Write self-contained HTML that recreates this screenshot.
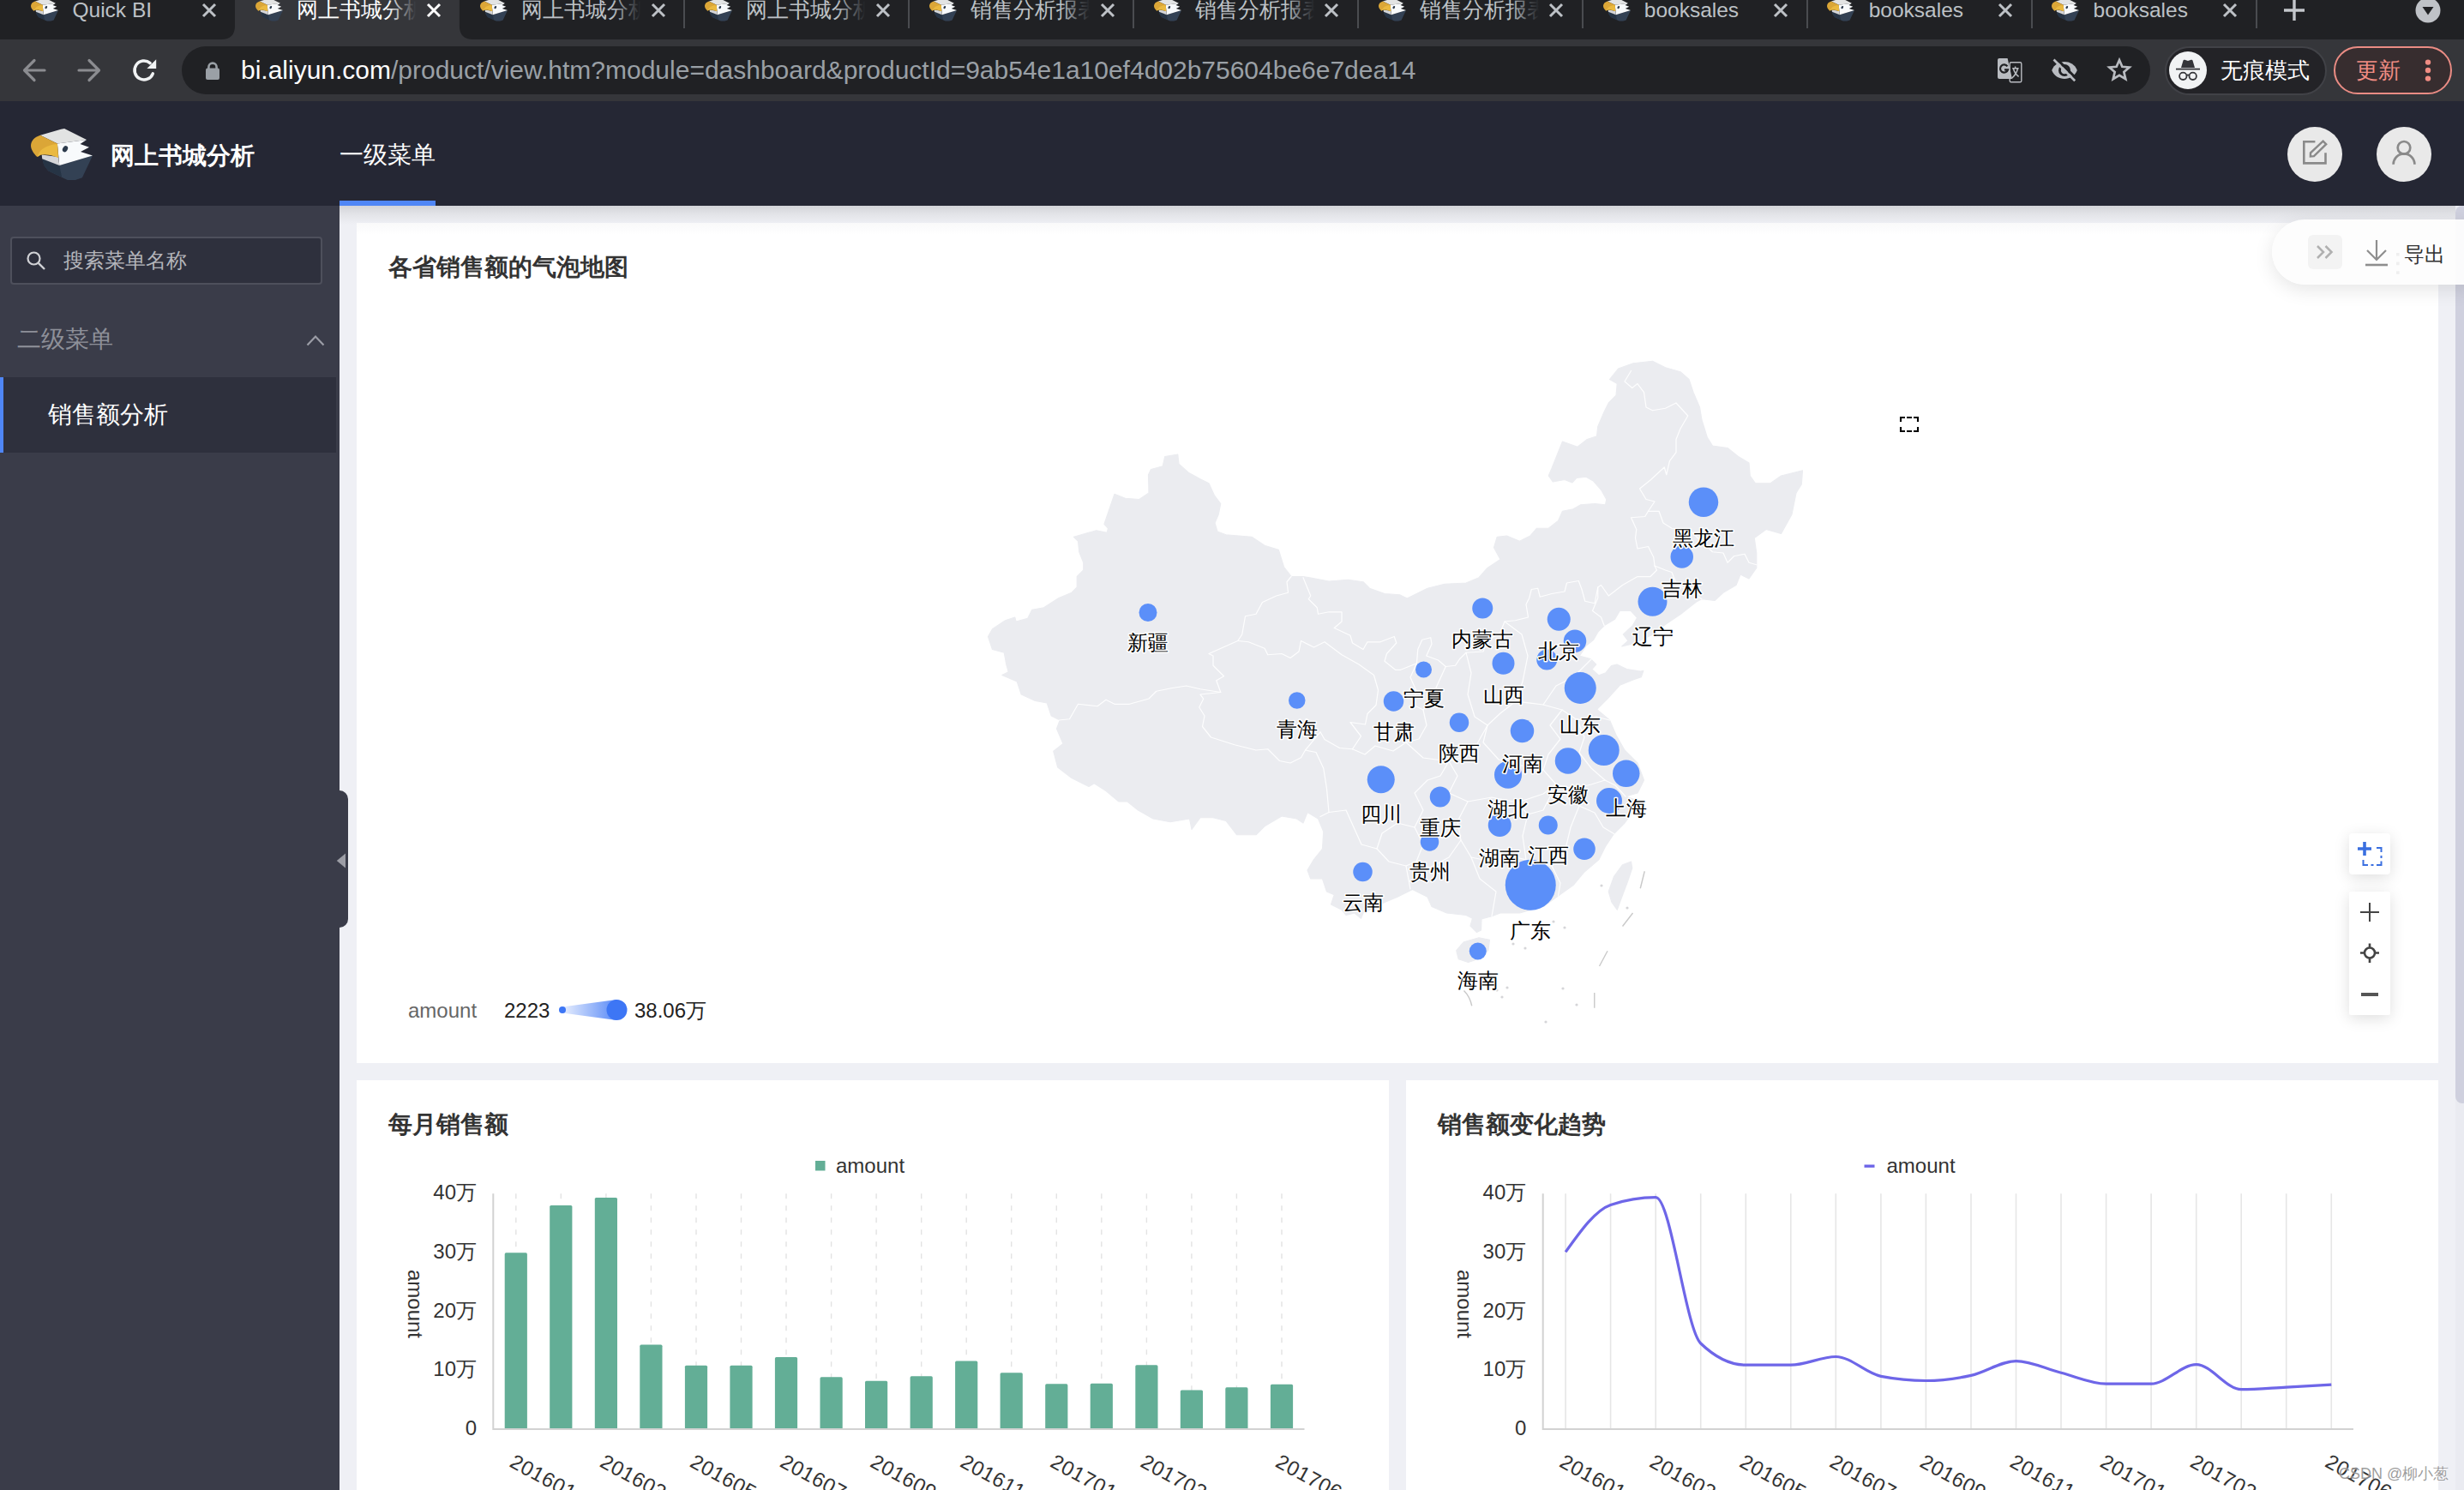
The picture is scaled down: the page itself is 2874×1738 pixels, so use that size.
<!DOCTYPE html>
<html lang="zh"><head><meta charset="utf-8"><title>网上书城分析</title>
<style>
*{box-sizing:border-box}
html,body{margin:0;padding:0}
body{width:2874px;height:1738px;overflow:hidden;position:relative;background:#eff0f5;font-family:"Liberation Sans",sans-serif;color:#333}
.abs{position:absolute}
.t{position:absolute;white-space:nowrap;line-height:1}
svg{position:absolute;overflow:visible}
svg text{font-family:"Liberation Sans",sans-serif}
#tabbar{left:0;top:0;width:2874px;height:46px;background:#202124}
#toolbar{left:0;top:46px;width:2874px;height:72px;background:#35363a}
.tab{position:absolute;top:0;height:46px;width:262px}
.tabtxt{position:absolute;left:72.4px;top:-2px;font-size:24.5px;line-height:28px;color:#bdc1c6;white-space:nowrap;overflow:hidden;width:140px}
.tabsep{position:absolute;top:0;width:2px;height:33px;background:#4a4c50}
#apphdr{left:0;top:118px;width:2874px;height:122px;background:#252734}
#sidebar{left:0;top:240px;width:396px;height:1498px;background:#3a3c49}
.card{position:absolute;background:#fff}
.ctitle{position:absolute;font-size:28px;font-weight:bold;color:#333;line-height:1;white-space:nowrap}
</style></head><body>

<svg width="0" height="0" style="position:absolute"><defs>
<symbol id="eagle" viewBox="9.9 9.9 72 60">
<polygon points="23.1,45.1 43.2,52.9 81.9,41.4 69.8,67.1 61.8,69.8 52.6,69.8 30.1,59.1 25.2,52.6" fill="#334154"/>
<polygon points="23.1,45.1 43.2,52.9 46,66.5 30.1,59.1 25.2,52.6" fill="#263445"/>
<polygon points="20.9,17.7 45,10.6 49,10 74.9,22.8 40.8,27.4" fill="#e2e3e3"/>
<polygon points="40.8,27.4 74.9,22.8 67.4,27.9 77.9,31.7 67.9,36.8 81.9,41.4 43.2,52.9" fill="#f8fafc"/>
<polygon points="22.6,40.3 41.9,43 43.2,52.9 23.1,45.1" fill="#d4d5d8"/>
<path d="M20.9,17.7 L40.8,27.4 L41.9,44 C36,41 28,39.3 21.5,40.5 L17.2,43 C13,39 10,34 9.9,30 C10,24 14,20 20.9,17.7 Z" fill="#dba637"/>
<path d="M40.8,28 C33,28.5 25.5,31.5 21.5,35.5 C19.3,38 18.3,40.5 17.6,42.8 L21.5,40.5 C28,39.3 36,41 41.9,44 Z" fill="#eab940"/>
<ellipse cx="49.9" cy="33.6" rx="2.8" ry="3.8" transform="rotate(32 49.9 33.6)" fill="#2d3b4d"/>
</symbol>
</defs></svg>

<div id="tabbar" class="abs">
<svg width="2874" height="46" viewBox="0 0 2874 46" style="left:0;top:0"><path d="M258.0,46 Q274.0,46 274.0,30 L274.0,0 L535.9,0 L535.9,30 Q535.9,46 551.9,46 Z" fill="#35363a"/></svg>
<div class="tab" style="left:12.1px"><svg width="32" height="26.7" style="left:24.2px;top:-1.7px"><use href="#eagle" width="32" height="26.7"/></svg><div class="tabtxt" style="color:#bdc1c6">Quick BI</div><svg width="18" height="18" viewBox="0 0 18 18" style="left:222.9px;top:3px"><path d="M2,2 L16,16 M16,2 L2,16" stroke="#bdc1c6" stroke-width="3" fill="none"/></svg></div>
<div class="tab" style="left:274.0px"><svg width="32" height="26.7" style="left:24.2px;top:-1.7px"><use href="#eagle" width="32" height="26.7"/></svg><div class="tabtxt" style="color:#ffffff"><span style="display:inline-block;width:147.0px;text-align:justify;text-align-last:justify">网上书城分析</span></div><div class="abs" style="left:178px;top:0;width:36px;height:30px;background:linear-gradient(90deg,rgba(53,54,58,0),rgba(53,54,58,1) 92%)"></div><svg width="18" height="18" viewBox="0 0 18 18" style="left:222.9px;top:3px"><path d="M2,2 L16,16 M16,2 L2,16" stroke="#ffffff" stroke-width="3" fill="none"/></svg></div>
<div class="tab" style="left:535.9px"><svg width="32" height="26.7" style="left:24.2px;top:-1.7px"><use href="#eagle" width="32" height="26.7"/></svg><div class="tabtxt" style="color:#bdc1c6"><span style="display:inline-block;width:147.0px;text-align:justify;text-align-last:justify">网上书城分析</span></div><div class="abs" style="left:178px;top:0;width:36px;height:30px;background:linear-gradient(90deg,rgba(32,33,36,0),rgba(32,33,36,1) 92%)"></div><svg width="18" height="18" viewBox="0 0 18 18" style="left:222.9px;top:3px"><path d="M2,2 L16,16 M16,2 L2,16" stroke="#bdc1c6" stroke-width="3" fill="none"/></svg></div>
<div class="tab" style="left:797.8px"><svg width="32" height="26.7" style="left:24.2px;top:-1.7px"><use href="#eagle" width="32" height="26.7"/></svg><div class="tabtxt" style="color:#bdc1c6"><span style="display:inline-block;width:147.0px;text-align:justify;text-align-last:justify">网上书城分析</span></div><div class="abs" style="left:178px;top:0;width:36px;height:30px;background:linear-gradient(90deg,rgba(32,33,36,0),rgba(32,33,36,1) 92%)"></div><svg width="18" height="18" viewBox="0 0 18 18" style="left:222.9px;top:3px"><path d="M2,2 L16,16 M16,2 L2,16" stroke="#bdc1c6" stroke-width="3" fill="none"/></svg></div>
<div class="tab" style="left:1059.7px"><svg width="32" height="26.7" style="left:24.2px;top:-1.7px"><use href="#eagle" width="32" height="26.7"/></svg><div class="tabtxt" style="color:#bdc1c6"><span style="display:inline-block;width:147.0px;text-align:justify;text-align-last:justify">销售分析报表</span></div><div class="abs" style="left:178px;top:0;width:36px;height:30px;background:linear-gradient(90deg,rgba(32,33,36,0),rgba(32,33,36,1) 92%)"></div><svg width="18" height="18" viewBox="0 0 18 18" style="left:222.9px;top:3px"><path d="M2,2 L16,16 M16,2 L2,16" stroke="#bdc1c6" stroke-width="3" fill="none"/></svg></div>
<div class="tab" style="left:1321.6px"><svg width="32" height="26.7" style="left:24.2px;top:-1.7px"><use href="#eagle" width="32" height="26.7"/></svg><div class="tabtxt" style="color:#bdc1c6"><span style="display:inline-block;width:147.0px;text-align:justify;text-align-last:justify">销售分析报表</span></div><div class="abs" style="left:178px;top:0;width:36px;height:30px;background:linear-gradient(90deg,rgba(32,33,36,0),rgba(32,33,36,1) 92%)"></div><svg width="18" height="18" viewBox="0 0 18 18" style="left:222.9px;top:3px"><path d="M2,2 L16,16 M16,2 L2,16" stroke="#bdc1c6" stroke-width="3" fill="none"/></svg></div>
<div class="tab" style="left:1583.5px"><svg width="32" height="26.7" style="left:24.2px;top:-1.7px"><use href="#eagle" width="32" height="26.7"/></svg><div class="tabtxt" style="color:#bdc1c6"><span style="display:inline-block;width:147.0px;text-align:justify;text-align-last:justify">销售分析报表</span></div><div class="abs" style="left:178px;top:0;width:36px;height:30px;background:linear-gradient(90deg,rgba(32,33,36,0),rgba(32,33,36,1) 92%)"></div><svg width="18" height="18" viewBox="0 0 18 18" style="left:222.9px;top:3px"><path d="M2,2 L16,16 M16,2 L2,16" stroke="#bdc1c6" stroke-width="3" fill="none"/></svg></div>
<div class="tab" style="left:1845.4px"><svg width="32" height="26.7" style="left:24.2px;top:-1.7px"><use href="#eagle" width="32" height="26.7"/></svg><div class="tabtxt" style="color:#bdc1c6">booksales</div><svg width="18" height="18" viewBox="0 0 18 18" style="left:222.9px;top:3px"><path d="M2,2 L16,16 M16,2 L2,16" stroke="#bdc1c6" stroke-width="3" fill="none"/></svg></div>
<div class="tab" style="left:2107.3px"><svg width="32" height="26.7" style="left:24.2px;top:-1.7px"><use href="#eagle" width="32" height="26.7"/></svg><div class="tabtxt" style="color:#bdc1c6">booksales</div><svg width="18" height="18" viewBox="0 0 18 18" style="left:222.9px;top:3px"><path d="M2,2 L16,16 M16,2 L2,16" stroke="#bdc1c6" stroke-width="3" fill="none"/></svg></div>
<div class="tab" style="left:2369.2px"><svg width="32" height="26.7" style="left:24.2px;top:-1.7px"><use href="#eagle" width="32" height="26.7"/></svg><div class="tabtxt" style="color:#bdc1c6">booksales</div><svg width="18" height="18" viewBox="0 0 18 18" style="left:222.9px;top:3px"><path d="M2,2 L16,16 M16,2 L2,16" stroke="#bdc1c6" stroke-width="3" fill="none"/></svg></div>
<div class="tabsep" style="left:797.4px"></div>
<div class="tabsep" style="left:1059.3px"></div>
<div class="tabsep" style="left:1321.2px"></div>
<div class="tabsep" style="left:1583.1px"></div>
<div class="tabsep" style="left:1845.0px"></div>
<div class="tabsep" style="left:2106.9px"></div>
<div class="tabsep" style="left:2368.8px"></div>
<div class="tabsep" style="left:2630.7px"></div>
<svg width="26" height="26" viewBox="0 0 26 26" style="left:2663px;top:-1px"><path d="M13,1 V25 M1,13 H25" stroke="#c4c7cc" stroke-width="3.4" fill="none"/></svg>
<svg width="30" height="30" viewBox="0 0 30 30" style="left:2817px;top:-3px"><circle cx="15" cy="15" r="14.5" fill="#bfc2c7"/><path d="M8.5,11 H21.5 L15,20.5 Z" fill="#202124"/></svg>
</div>
<div id="toolbar" class="abs">
<svg width="30" height="30" viewBox="0 0 30 30" style="left:25px;top:20.5px"><path d="M27,15 H4.5 M15,3.5 L3.5,15 L15,26.5" stroke="#8b8c90" stroke-width="3.2" fill="none" stroke-linecap="round" stroke-linejoin="round"/></svg>
<svg width="30" height="30" viewBox="0 0 30 30" style="left:89px;top:20.5px"><path d="M3,15 H25.5 M15,3.5 L26.5,15 L15,26.5" stroke="#8b8c90" stroke-width="3.2" fill="none" stroke-linecap="round" stroke-linejoin="round"/></svg>
<svg width="32" height="32" viewBox="0 0 32 32" style="left:153px;top:20px"><path d="M25.3,19.8 A11,11 0 1 1 22.1,7.6" stroke="#f1f3f4" stroke-width="3.5" fill="none" stroke-linecap="round"/><path d="M29.2,3.3 V14.1 H18.4 Z" fill="#f1f3f4"/></svg>
<div class="abs" style="left:212px;top:8px;width:2296px;height:56px;border-radius:28px;background:#202124"></div>
<svg width="20" height="26" viewBox="0 0 20 26" style="left:238px;top:24px"><path d="M5.4,11 V8.2 A4.6,4.6 0 0 1 14.6,8.2 V11" stroke="#9aa0a6" stroke-width="2.6" fill="none"/><rect x="2" y="9.5" width="16" height="13.5" rx="2" fill="#9aa0a6"/></svg>
<svg width="1380" height="72" viewBox="0 0 1380 72" style="left:281px;top:0"><text x="0" y="46.4" font-size="30" fill="#9aa0a6" textLength="1370.5" lengthAdjust="spacing"><tspan fill="#fff">bi.aliyun.com</tspan>/product/view.htm?module=dashboard&amp;productId=9ab54e1a10ef4d02b75604be6e7dea14</text></svg>
<svg width="30" height="30" viewBox="0 0 30 30" style="left:2329.5px;top:21.5px"><rect x="14.2" y="4.8" width="13.6" height="23" rx="1.6" fill="none" stroke="#b9bcc1" stroke-width="1.4"/><path d="M2,0 H11.6 L17,24 H2 Q0,24 0,22 V2 Q0,0 2,0 Z" fill="#b9bcc1"/><path d="M17.2,11.8 H24.6 M20.6,9.6 V11.8 M18.4,12 C19.4,16 22,19.4 24.6,21.4 M23.4,12 C22.6,16.4 19.8,20.4 16.6,23.2" stroke="#b9bcc1" stroke-width="1.5" fill="none"/><path d="M11.4,9.4 A4.6,4.6 0 1 0 12,13.4 H8" stroke="#202124" stroke-width="2.2" fill="none"/></svg>
<svg width="32" height="28" viewBox="0 0 32 28" style="left:2392px;top:22px"><path d="M1.2,14 C6,0.7 26,0.7 30.8,14 C26,27.3 6,27.3 1.2,14 Z" fill="#b9bcc1"/><circle cx="16" cy="14" r="7" fill="#202124"/><circle cx="16" cy="14" r="4.2" fill="#b9bcc1"/><path d="M5.6,-0.6 L30.2,24" stroke="#202124" stroke-width="3"/><path d="M3.5,1.5 L28.2,26.2" stroke="#b9bcc1" stroke-width="2.7"/></svg>
<svg width="28" height="28" viewBox="0 0 32 32" style="left:2458px;top:21px"><path d="M16,3.5 L19.8,12.3 L29.3,13.1 L22.1,19.4 L24.3,28.7 L16,23.8 L7.7,28.7 L9.9,19.4 L2.7,13.1 L12.2,12.3 Z" stroke="#b9bcc1" stroke-width="3.1" fill="none" stroke-linejoin="miter"/></svg>
<div class="abs" style="left:2524.5px;top:7.5px;width:189px;height:57px;border-radius:28.5px;background:#232327;border:2px solid #414247"></div>
<svg width="44" height="44" viewBox="0 0 44 44" style="left:2530px;top:14px"><circle cx="22" cy="22" r="22" fill="#f1f3f4"/><path d="M14,19 L16.5,10.5 Q17,9.3 18.3,9.8 L22,11 L25.7,9.8 Q27,9.3 27.5,10.5 L30,19 Z" fill="#35363a"/><path d="M8,20.6 H36" stroke="#35363a" stroke-width="1.8"/><circle cx="16.3" cy="28.8" r="4.2" fill="none" stroke="#35363a" stroke-width="1.8"/><circle cx="27.7" cy="28.8" r="4.2" fill="none" stroke="#35363a" stroke-width="1.8"/><path d="M20.3,28 Q22,26.8 23.7,28" stroke="#35363a" stroke-width="1.6" fill="none"/></svg>
<div class="t" style="left:2590px;top:21px;font-size:26px;line-height:30px;color:#fff;width:104px;text-align:justify;text-align-last:justify">无痕模式</div>
<div class="abs" style="left:2722px;top:8px;width:138px;height:56px;border-radius:28px;background:#372d2f;border:2px solid #ea8c84"></div>
<div class="t" style="left:2748px;top:21px;font-size:26px;line-height:30px;color:#f08c83;width:52px;text-align:justify;text-align-last:justify">更新</div>
<svg width="10" height="32" viewBox="0 0 10 32" style="left:2827px;top:20px"><circle cx="5" cy="6.6" r="3.2" fill="#f08c83"/><circle cx="5" cy="16" r="3.2" fill="#f08c83"/><circle cx="5" cy="25.6" r="3.2" fill="#f08c83"/></svg>
</div>
<div id="apphdr" class="abs">
<svg width="72" height="60" style="left:36px;top:32px"><use href="#eagle" width="72" height="60"/></svg>
<div class="t" style="left:129px;top:50px;font-size:28px;font-weight:bold;color:#fff;width:168px;text-align:justify;text-align-last:justify">网上书城分析</div>
<div class="t" style="left:396px;top:49px;font-size:28px;color:#fff;width:112px;text-align:justify;text-align-last:justify">一级菜单</div>
<div class="abs" style="left:396px;top:116px;width:112px;height:6px;background:#4f86f6"></div>
<svg width="64" height="64" viewBox="0 0 64 64" style="left:2668px;top:30px"><circle cx="32" cy="32" r="32" fill="#e9e9e9"/><path d="M32.4,17.2 H19.3 V42.4 H44.5 V30.2" stroke="#8a8a8a" stroke-width="2.6" fill="none"/><path d="M41.6,16.6 L45.2,20.2 L31,34.2 L26.9,34.5 L27,30.4 Z" stroke="#8a8a8a" stroke-width="2.4" fill="none" stroke-linejoin="miter"/></svg>
<svg width="64" height="64" viewBox="0 0 64 64" style="left:2772px;top:30px"><circle cx="32" cy="32" r="32" fill="#e9e9e9"/><circle cx="32" cy="24.3" r="7.3" stroke="#8a8a8a" stroke-width="2.7" fill="none"/><path d="M19.6,43.8 A12.4,12.4 0 0 1 44.4,43.8" stroke="#8a8a8a" stroke-width="2.7" fill="none"/></svg>
</div>
<div id="sidebar" class="abs">
<div class="abs" style="left:12px;top:36px;width:364px;height:56px;border-radius:4px;background:#2e303d;border:2px solid #4e505c"></div>
<svg width="24" height="24" viewBox="0 0 24 24" style="left:30px;top:52px"><circle cx="9.5" cy="9.5" r="7" stroke="#d0d1d5" stroke-width="2.2" fill="none"/><path d="M14.8,14.8 L22,22" stroke="#d0d1d5" stroke-width="2.4"/></svg>
<div class="t" style="left:74px;top:52px;font-size:24px;color:#b4b5bb;width:144px;text-align:justify;text-align-last:justify">搜索菜单名称</div>
<div class="t" style="left:20px;top:142px;font-size:28px;color:#8e9099;width:112px;text-align:justify;text-align-last:justify">二级菜单</div>
<svg width="22" height="14" viewBox="0 0 22 14" style="left:357px;top:150px"><path d="M1.5,12.5 L11,2.5 L20.5,12.5" stroke="#9b9da6" stroke-width="2.2" fill="none"/></svg>
<div class="abs" style="left:0;top:200px;width:392px;height:88px;background:#2e303d"></div>
<div class="abs" style="left:0;top:200px;width:4px;height:88px;background:#4f86f6"></div>
<div class="t" style="left:56px;top:230px;font-size:28px;color:#fff;width:140px;text-align:justify;text-align-last:justify">销售额分析</div>
</div>
<div class="abs" style="left:396px;top:240px;width:2468px;height:22px;background:linear-gradient(180deg,#d3d4d9 0%,#e3e4e8 45%,#eff0f5 100%)"></div>
<div class="card" style="left:416px;top:260px;width:2428px;height:980px;background:linear-gradient(180deg,#f9f9fa 0,#fff 14px)"></div>
<div class="card" style="left:416px;top:1260px;width:1204px;height:478px"></div>
<div class="card" style="left:1640px;top:1260px;width:1204px;height:478px"></div>
<div class="ctitle" style="left:453px;top:298px;width:280px;text-align:justify;text-align-last:justify">各省销售额的气泡地图</div>
<div class="ctitle" style="left:453px;top:1298px;width:140px;text-align:justify;text-align-last:justify">每月销售额</div>
<div class="ctitle" style="left:1677px;top:1298px;width:196px;text-align:justify;text-align-last:justify">销售额变化趋势</div>
<div class="abs" style="left:396px;top:922px;width:10px;height:160px;background:#3a3c49;border-radius:0 10px 10px 0"></div>
<svg width="12" height="18" viewBox="0 0 12 18" style="left:392px;top:995px"><path d="M11,0.5 V17.5 L0.8,9 Z" fill="#9c9da5"/></svg>
<svg width="2874" height="1738" viewBox="0 0 2874 1738" style="left:0;top:0">
<g fill="#ebecf0" stroke="#ebecf0" stroke-width="1.2" stroke-linejoin="round">
<polygon points="1152.5,742.5 1157.5,733.75 1172.5,723.75 1183.75,720 1185,725 1198.75,721.25 1203.75,711.25 1217.5,708.75 1235,697.5 1250,691.25 1256.25,685 1256.25,672.5 1263.75,665 1263.75,656.25 1258.75,643.75 1257.5,631.25 1252.5,626.25 1278.75,618.75 1291.25,621.25 1292.5,616.25 1288,611.25 1300,576.25 1312.5,581.25 1328.75,582.5 1340,575 1339.5,553.75 1342.5,547.5 1356.25,543.75 1358.75,532.5 1373.75,530 1375,541.25 1386.25,551.25 1400,558.75 1410,563.75 1416.25,577.5 1423.75,587.5 1421.25,600 1417,610 1420,620 1430,623.75 1460,626.25 1475,636.25 1491.25,641.25 1497.5,661.25 1506.25,672.5 1520,672.5 1550,678 1572.5,676.25 1590,678.75 1597.5,686.25 1615,692.5 1632.5,693.75 1641.25,698 1665,686.25 1685,681.25 1710,680 1725,673.75 1735,662.5 1750,652.5 1742.5,638.75 1746.25,626.25 1757.5,625 1772.5,631.25 1785,625 1792.5,616.25 1806.25,616.25 1817.5,607.5 1822.5,596.25 1835,593.75 1843.75,588.75 1860,587.5 1872.5,588.75 1873.75,582.5 1867.5,571.25 1858.75,561.25 1850,556.25 1838.75,557.5 1833.75,563 1825,559.5 1811.25,562 1806.25,555 1810,546.25 1822.5,515 1840,521.25 1851.25,512.5 1862.5,508.75 1863.75,497.5 1871.25,480 1876.25,470 1885,461.25 1886.25,447.5 1877.5,442.5 1887.5,430 1905,423.75 1927.5,421.25 1942.5,428.75 1960,433.75 1970,442.5 1975,457.5 1982.5,475 1985,490 1991.25,510 1997.5,520 2015,522.5 2027.5,532.5 2040,540 2041.25,555 2047.5,563.75 2065,563.75 2077.5,555 2102.5,548.75 2101.25,565 2095,575 2090,600 2077.5,622.5 2060,617.5 2046.25,627.5 2048.75,645 2048.75,662.5 2040,675 2030,670 2025,682.5 2010,691.25 2000,700.5 1985,698.75 1978.6,702 1962.3,714.9 1942,728.7 1925.8,740.9 1905.5,750.6 1891.7,753.9 1899,747.4 1893.3,740 1903.9,730.3 1909.6,720.6 1902.3,712.5 1889.3,712.5 1883.6,722.2 1871.4,729.5 1864.1,736.8 1858.4,746.6 1850.3,753 1842.2,765.2 1855.2,768.5 1861.7,775 1856.8,780.6 1864.9,787.9 1873,784.7 1879.5,776.6 1886,775 1897.4,780.6 1913.6,783.1 1916.9,782.3 1914.4,789.6 1905.5,792.8 1889.3,799.3 1875,815 1862.5,827.5 1877.5,840 1885,857.5 1895,875 1910,890 1917.5,910 1910,925 1896,929 1911,934 1910,940 1895,960 1882.5,972.5 1872.5,987.5 1865,1002.5 1847.5,1017.5 1835,1032.5 1817.5,1045 1800,1057.5 1772.5,1065 1750,1065 1740,1068.75 1728,1072 1727.5,1085 1722.5,1087.5 1715,1080 1717.5,1071.25 1710,1067.5 1687.5,1065 1670,1057.5 1665,1046.25 1647.5,1037.5 1630,1046.25 1615,1052.5 1590,1065 1587.5,1071.25 1580,1065 1570,1067.5 1565,1061.25 1552.5,1055 1556.25,1043.75 1547.5,1040 1542.5,1025 1528.75,1025 1525,1015 1532.5,1002.5 1542.5,990 1543.75,970 1537.5,955 1525,947.5 1520,960 1512.5,955 1495,952 1475,963.75 1465,973.75 1442.5,973.75 1430,957.5 1415,953.75 1400,953.75 1390,967.5 1387.5,955 1365,958.75 1345,955 1327.5,945 1315,935 1305,935 1290,922.5 1276.25,913.75 1270,917.5 1250,907.5 1233.75,895 1228.75,876.25 1240,867.5 1232.5,850 1236.25,840 1226.25,835 1221.25,820 1207.5,817.5 1191.25,810 1186.25,795 1168.75,787.5 1176.25,783.75 1173.75,775 1171.25,761.25 1157.5,757.5"/>
<polygon points="1902.5,1005 1892.5,1008.75 1882.5,1022.5 1876.25,1040 1880,1052.5 1886.25,1061.25 1891.25,1047.5 1898.75,1027.5 1903.75,1012.5"/>
<polygon points="1698.75,1108.75 1707.5,1098.75 1725,1093.75 1737.5,1096.25 1736,1108 1727.5,1117.5 1712.5,1122.5 1701.25,1118.75"/>
</g>
<g fill="none" stroke="#fff" stroke-width="1.25" stroke-opacity="0.9" stroke-linejoin="round" stroke-linecap="round">
<polyline points="1506,672.5 1501,678.75 1502.5,691.25 1488.75,695 1472.5,702.5 1465,716.25 1452.5,718.75 1448.75,740 1443.75,747.5 1410,762.5 1415,765 1415,776.25 1427.5,788.75 1418.75,793.75 1423.75,807.5 1400,803.75 1383.75,800 1367.5,802.5 1348.75,806.25 1340,815 1317.5,821.25 1300,821.25 1290,816.25 1280,823.75 1257.5,821.25 1247.5,838.75 1235,840"/>
<polyline points="1423.75,807.5 1400,810 1403.75,815 1398.75,825 1405,835 1402.5,847.5 1412.5,860 1440,868.75 1465,875 1478.75,873.75 1492.5,887.5 1505,890 1517.5,883.75 1522.5,875"/>
<polyline points="1522.5,875 1535,877.5 1543.75,896.25 1547.5,920 1550,947.5 1540,952.5"/>
<polyline points="1443.75,747.5 1456.25,748.75 1475,756.25 1478.75,763.75 1495,762.5 1505,767.5 1515,760 1517.5,747.5 1532.5,755 1545,748.75 1565,763.75 1585,775 1602.5,787.5 1607.5,805 1605,822.5 1595,832.5 1592.5,845 1575,842.5 1587.5,858.75 1577.5,873.75 1562.5,872.5 1545,862.5 1540,853.75 1522.5,875"/>
<polyline points="1520,673.75 1528.75,695 1526.25,698.75 1536.25,708.75 1537.5,716.25 1550,713.75 1565,713.75 1565,725 1556.25,732.5 1575,741.25 1577.5,750 1590,757.5 1595,748.75 1610,748.75 1626.25,742.5 1628.75,750 1617.5,762.5 1615,771.25 1627.5,781.25 1633.75,781.25 1652.5,773.75 1653.75,757.5 1658.75,746.25 1668.75,743.75 1670,751.25 1663.75,765 1677.5,770 1686.25,777.5 1697.5,776.25 1702.5,768.75 1710,761.25 1730,760 1735,747.5 1750,737.5 1755,725 1767.5,723.75 1782.5,720 1780,705 1783.75,697.5 1786.25,687.5 1793.75,686.25 1796.25,696.25 1810,692.5 1825,690 1827.5,680 1841.25,677.5 1845,687.5 1848.75,701.25 1860,703.75 1863.75,685 1867.5,682.5 1876.25,695 1892.5,682.5 1910,672.5 1925,672.5 1932.5,665 1930,660 1928.75,650 1922.5,637.5 1910,640 1907.5,627.5 1908.75,617.5 1902.5,603.75 1918.75,602.5 1922.5,596.25 1930,585 1920,582.5 1912.5,570 1925,560 1941.25,545 1943.75,553.75 1947.5,537.5 1955,527.5 1955,512.5 1960,500 1968.75,485 1955,470 1942.5,476.25 1927.5,478.75 1920,475 1917.5,457.5 1910,447.5 1903.75,452.5 1895,445 1902.5,432.5"/>
<polyline points="1922.5,596.25 1935,596.25 1940,610 1950,616.25 1970,617.5 1985,632 1997.5,643.75 2010,645 2015,656.25 2022.5,648.75 2035,646.25 2040,656.25 2048.75,658.75"/>
<polyline points="1930,660 1942.5,665 1950,667.5 1955,680 1970,690 1985,698.75"/>
<polyline points="1863.75,685 1863.75,697.5 1857.5,712.5 1867.5,720 1871.25,730"/>
<polyline points="1652.5,773.75 1645,790 1652,806 1648,822 1660,828 1668,818 1676,800 1686.25,777.5"/>
<polyline points="1660,828 1664,846 1655,862 1640,866 1625,876 1604,870 1592,880 1577.5,873.75"/>
<polyline points="1710,761.25 1716,785 1712,810 1720,836 1735,846"/>
<polyline points="1640,866 1660,884 1690,888 1716,880 1735,846"/>
<polyline points="1755,725 1775,740 1782,765 1776,795 1768,818 1750,832 1735,846"/>
<polyline points="1735,846 1730,866 1748,886 1770,892 1800,898 1806,880 1820,862 1808,846 1822,828 1800,822 1768,818"/>
<polyline points="1800,822 1815,800 1835,790 1850,775 1857,768"/>
<polyline points="1822,828 1840,840 1862,836 1877.5,840"/>
<polyline points="1840,840 1848,860 1842,878 1856,896 1872,910 1884,916 1896,929"/>
<polyline points="1690,888 1700,905 1690,925 1712,935 1740,930 1770,936 1800,926 1815,915 1800,898"/>
<polyline points="1550,947.5 1570,945 1588,985 1606,990 1612,972 1630,960 1650,965 1660,945 1650,925 1665,910 1680,905 1690,888"/>
<polyline points="1650,965 1660,985 1652,1005 1668,1012 1690,1000 1704,980 1700,958 1712,935"/>
<polyline points="1606,990 1620,1005 1640,1010 1652,1005"/>
<polyline points="1640,1010 1645,1037"/>
<polyline points="1704,980 1716,1000 1740,1005 1760,998 1780,1003 1776,975 1782,950 1770,936"/>
<polyline points="1782,950 1800,945 1815,915 1835,920 1842,940 1832,965 1826,990 1810,1010 1780,1003"/>
<polyline points="1835,920 1856,915 1872,910"/>
<polyline points="1842,940 1860,948 1870,965 1882.5,972.5"/>
<polyline points="1810,1010 1820,1030 1817.5,1045"/>
<polyline points="1716,1000 1726,1025 1745,1040 1740,1068.75"/>
</g>
<g stroke="#c9c9c9" stroke-width="1.4" fill="none">
<line x1="1918.25" y1="1016.25" x2="1913.25" y2="1036.25"/>
<line x1="1904.5" y1="1065" x2="1892.5" y2="1080.5"/>
<line x1="1875" y1="1109.25" x2="1865.5" y2="1127"/>
<line x1="1859.75" y1="1158" x2="1859.75" y2="1175.75"/>
<path d="M1707.5,1155.5 Q1714.5,1162.5 1716.75,1173.25"/>
</g>
<g fill="#d5d5d8">
<circle cx="1868" cy="1033" r="1.6"/>
<circle cx="1898" cy="1059" r="1.6"/>
<circle cx="1812" cy="1075" r="1.6"/>
<circle cx="1825" cy="1082" r="1.6"/>
<circle cx="1765" cy="1101" r="1.6"/>
<circle cx="1779" cy="1106" r="1.6"/>
<circle cx="1746" cy="1155" r="1.6"/>
<circle cx="1758" cy="1152" r="1.6"/>
<circle cx="1823" cy="1153" r="1.6"/>
<circle cx="1839" cy="1172" r="1.6"/>
<circle cx="1803" cy="1192" r="1.6"/>
<circle cx="1752" cy="1163" r="1.6"/>
</g>
<g fill="#5b8ff9">
<circle cx="1987" cy="585.75" r="17.25"/>
<circle cx="1961.75" cy="649.5" r="13.25"/>
<circle cx="1927.5" cy="701.75" r="17"/>
<circle cx="1729.25" cy="709.5" r="12"/>
<circle cx="1818.25" cy="722.25" r="13.5"/>
<circle cx="1837" cy="747.75" r="13.25"/>
<circle cx="1804.25" cy="769.5" r="12"/>
<circle cx="1753.5" cy="773.75" r="13"/>
<circle cx="1660.5" cy="781" r="9.5"/>
<circle cx="1339" cy="714.5" r="10.5"/>
<circle cx="1512.75" cy="817" r="9.75"/>
<circle cx="1625.5" cy="818" r="11.75"/>
<circle cx="1702" cy="842.75" r="11.25"/>
<circle cx="1843.25" cy="802.5" r="18.5"/>
<circle cx="1775.5" cy="852.5" r="13.75"/>
<circle cx="1829" cy="887.5" r="15.25"/>
<circle cx="1870.75" cy="875" r="18"/>
<circle cx="1896.75" cy="902.25" r="15.75"/>
<circle cx="1877" cy="934" r="15"/>
<circle cx="1759" cy="903.75" r="16"/>
<circle cx="1610.75" cy="909.25" r="16"/>
<circle cx="1679.75" cy="929.5" r="12"/>
<circle cx="1749.25" cy="962.5" r="13.5"/>
<circle cx="1805.75" cy="962.5" r="11"/>
<circle cx="1848" cy="990.25" r="12.75"/>
<circle cx="1667.5" cy="982" r="10.75"/>
<circle cx="1589.5" cy="1017" r="11.25"/>
<circle cx="1785.25" cy="1032.25" r="29.5"/>
<circle cx="1723.75" cy="1109.5" r="10"/>
</g>
<g font-size="24" text-anchor="middle" fill="#000" stroke="#fff" stroke-width="3" stroke-linejoin="round" paint-order="stroke">
<text x="1987" y="635.6" textLength="72" lengthAdjust="spacing">黑龙江</text>
<text x="1961.75" y="695.4" textLength="48" lengthAdjust="spacing">吉林</text>
<text x="1927.5" y="751.4" textLength="48" lengthAdjust="spacing">辽宁</text>
<text x="1729.25" y="754.1" textLength="72" lengthAdjust="spacing">内蒙古</text>
<text x="1818.25" y="768.4" textLength="48" lengthAdjust="spacing">北京</text>
<text x="1753.5" y="819.4" textLength="48" lengthAdjust="spacing">山西</text>
<text x="1660.5" y="823.1" textLength="48" lengthAdjust="spacing">宁夏</text>
<text x="1339" y="757.6" textLength="48" lengthAdjust="spacing">新疆</text>
<text x="1512.75" y="859.4" textLength="48" lengthAdjust="spacing">青海</text>
<text x="1625.5" y="862.4" textLength="48" lengthAdjust="spacing">甘肃</text>
<text x="1702" y="886.6" textLength="48" lengthAdjust="spacing">陕西</text>
<text x="1843.25" y="853.6" textLength="48" lengthAdjust="spacing">山东</text>
<text x="1775.5" y="898.9" textLength="48" lengthAdjust="spacing">河南</text>
<text x="1829" y="935.4" textLength="48" lengthAdjust="spacing">安徽</text>
<text x="1896.75" y="950.6" textLength="48" lengthAdjust="spacing">上海</text>
<text x="1759" y="952.4" textLength="48" lengthAdjust="spacing">湖北</text>
<text x="1610.75" y="957.9" textLength="48" lengthAdjust="spacing">四川</text>
<text x="1679.75" y="974.1" textLength="48" lengthAdjust="spacing">重庆</text>
<text x="1749.25" y="1008.6" textLength="48" lengthAdjust="spacing">湖南</text>
<text x="1805.75" y="1006.1" textLength="48" lengthAdjust="spacing">江西</text>
<text x="1667.5" y="1025.3" textLength="48" lengthAdjust="spacing">贵州</text>
<text x="1589.5" y="1060.8" textLength="48" lengthAdjust="spacing">云南</text>
<text x="1785.25" y="1094.3" textLength="48" lengthAdjust="spacing">广东</text>
<text x="1723.75" y="1152.1" textLength="48" lengthAdjust="spacing">海南</text>
</g>
<path d="M2217,492 V487 H2222 M2224,487 H2230 M2232,487 H2237 V492 M2237,498 V503 H2232 M2230,503 H2224 M2222,503 H2217 V498" fill="none" stroke="#000" stroke-width="2.1" stroke-linejoin="miter"/>
</svg>
<div class="t" style="left:476px;top:1167px;font-size:24px;color:#666">amount</div>
<div class="t" style="left:588px;top:1167px;font-size:24px;color:#222">2223</div>
<svg width="90" height="30" viewBox="0 0 90 30" style="left:646px;top:1163px"><defs><linearGradient id="lg" x1="0" x2="1" y1="0" y2="0"><stop offset="0" stop-color="#3d76f5" stop-opacity="0.12"/><stop offset="1" stop-color="#3d76f5" stop-opacity="0.85"/></linearGradient></defs><path d="M10,11.5 L73,3 V27 L10,18.5 Z" fill="url(#lg)"/><circle cx="10" cy="15" r="4" fill="#3d76f5"/><circle cx="73.5" cy="15" r="12" fill="#3d76f5"/></svg>
<div class="t" style="left:740px;top:1167px;font-size:24px;color:#222">38.06万</div>
<div class="abs" style="left:2740px;top:972px;width:48px;height:48px;background:#fff;border-radius:4px;box-shadow:0 4px 18px rgba(0,0,0,.13)"></div>
<div class="abs" style="left:2740px;top:1040px;width:48px;height:144px;background:#fff;border-radius:2px;box-shadow:0 4px 18px rgba(0,0,0,.13)"></div>
<svg width="48" height="48" viewBox="0 0 48 48" style="left:2740px;top:972px"><path d="M18,10 V26 M10,18 H26" stroke="#3a6fe0" stroke-width="3.6"/><path d="M32,17 H37.5 V22 M37.5,26 V29 M37.5,32.5 V37 H32 M28.5,37 H25.5 M22,37 H16.5 V31" stroke="#3a6fe0" stroke-width="2" fill="none"/></svg>
<svg width="48" height="144" viewBox="0 0 48 144" style="left:2740px;top:1040px"><path d="M24,13 V35 M13,24 H35" stroke="#444" stroke-width="2"/><circle cx="24" cy="71.5" r="6" stroke="#444" stroke-width="2.6" fill="none"/><path d="M24,60.5 V66 M24,77 V83 M13,71.5 H18.5 M29.5,71.5 H35" stroke="#444" stroke-width="2.6"/><path d="M14,120 H34" stroke="#555" stroke-width="4"/></svg>
<div class="abs" style="left:2864px;top:240px;width:10px;height:1498px;background:#eaebf1"></div>
<div class="abs" style="left:2864px;top:240px;width:16px;height:1047px;border-radius:8px;background:#cfd0de"></div>
<div class="abs" style="left:2650px;top:256px;width:260px;height:76px;border-radius:38px;background:rgba(253,253,253,.96);box-shadow:0 6px 22px rgba(0,0,0,.10)"></div>
<div class="abs" style="left:2692px;top:274px;width:40px;height:40px;border-radius:6px;background:#f3f3f3"></div>
<svg width="40" height="40" viewBox="0 0 40 40" style="left:2692px;top:274px"><path d="M11,13 L18,20 L11,27 M20.5,13 L27.5,20 L20.5,27" stroke="#b0b0b0" stroke-width="2.5" fill="none"/></svg>
<svg width="30" height="34" viewBox="0 0 30 34" style="left:2757px;top:278px"><path d="M15,2 V24 M4,14 L15,25 L26,14" stroke="#8e8e8e" stroke-width="2.2" fill="none"/><path d="M2,31 H28" stroke="#8e8e8e" stroke-width="2.6"/></svg>
<svg width="4" height="26" viewBox="0 0 4 26" style="left:2794.5px;top:295px"><path d="M0,0H3.6V3.6H0Z M0,10.6H3.6V14.2H0Z M0,21.2H3.6V24.8H0Z" fill="#efefef"/></svg>
<div class="t" style="left:2804px;top:284.5px;font-size:24px;color:#333;width:48px;text-align:justify;text-align-last:justify">导出</div>
<svg width="2874" height="1738" viewBox="0 0 2874 1738" style="left:0;top:0">
<g stroke="#e3e3e3" stroke-width="1.4" stroke-dasharray="6 8">
<line x1="601.8" y1="1392.3" x2="601.8" y2="1667.0"/>
<line x1="654.3" y1="1392.3" x2="654.3" y2="1667.0"/>
<line x1="706.9" y1="1392.3" x2="706.9" y2="1667.0"/>
<line x1="759.4" y1="1392.3" x2="759.4" y2="1667.0"/>
<line x1="812.0" y1="1392.3" x2="812.0" y2="1667.0"/>
<line x1="864.5" y1="1392.3" x2="864.5" y2="1667.0"/>
<line x1="917.0" y1="1392.3" x2="917.0" y2="1667.0"/>
<line x1="969.6" y1="1392.3" x2="969.6" y2="1667.0"/>
<line x1="1022.1" y1="1392.3" x2="1022.1" y2="1667.0"/>
<line x1="1074.7" y1="1392.3" x2="1074.7" y2="1667.0"/>
<line x1="1127.2" y1="1392.3" x2="1127.2" y2="1667.0"/>
<line x1="1179.7" y1="1392.3" x2="1179.7" y2="1667.0"/>
<line x1="1232.3" y1="1392.3" x2="1232.3" y2="1667.0"/>
<line x1="1284.8" y1="1392.3" x2="1284.8" y2="1667.0"/>
<line x1="1337.4" y1="1392.3" x2="1337.4" y2="1667.0"/>
<line x1="1389.9" y1="1392.3" x2="1389.9" y2="1667.0"/>
<line x1="1442.4" y1="1392.3" x2="1442.4" y2="1667.0"/>
<line x1="1495.0" y1="1392.3" x2="1495.0" y2="1667.0"/>
</g>
<path d="M575.3,1392.3 V1667.0 H1521.5" stroke="#d2d2d2" stroke-width="2" fill="none"/>
<g font-size="24" fill="#333" text-anchor="end">
<text x="556.0" y="1398.7">40万</text>
<text x="556.0" y="1467.7">30万</text>
<text x="556.0" y="1536.7">20万</text>
<text x="556.0" y="1605.2">10万</text>
<text x="556.0" y="1673.7">0</text>
</g>
<text x="483" y="1521" font-size="24" fill="#333" text-anchor="middle" transform="rotate(90 483 1521)" dy="7">amount</text>
<g font-size="24" fill="#333" letter-spacing="0.6">
<text x="597.2" y="1711.1" transform="rotate(28.5 597.2 1702.5)">201601</text>
<text x="702.3" y="1711.1" transform="rotate(28.5 702.3 1702.5)">201603</text>
<text x="807.4" y="1711.1" transform="rotate(28.5 807.4 1702.5)">201605</text>
<text x="912.4" y="1711.1" transform="rotate(28.5 912.4 1702.5)">201607</text>
<text x="1017.5" y="1711.1" transform="rotate(28.5 1017.5 1702.5)">201609</text>
<text x="1122.6" y="1711.1" transform="rotate(28.5 1122.6 1702.5)">201611</text>
<text x="1227.7" y="1711.1" transform="rotate(28.5 1227.7 1702.5)">201701</text>
<text x="1332.8" y="1711.1" transform="rotate(28.5 1332.8 1702.5)">201703</text>
<text x="1490.4" y="1711.1" transform="rotate(28.5 1490.4 1702.5)">201706</text>
</g>
<g fill="#63ae96">
<path d="M588.7,1666.0 V1462.9 Q588.7,1461.3 590.3,1461.3 H613.3 Q614.9,1461.3 614.9,1462.9 V1666.0 Z"/>
<path d="M641.2,1666.0 V1407.6 Q641.2,1406.0 642.8,1406.0 H665.8 Q667.4,1406.0 667.4,1407.6 V1666.0 Z"/>
<path d="M693.8,1666.0 V1398.5 Q693.8,1396.9 695.4,1396.9 H718.4 Q720.0,1396.9 720.0,1398.5 V1666.0 Z"/>
<path d="M746.3,1666.0 V1570.2 Q746.3,1568.6 747.9,1568.6 H770.9 Q772.5,1568.6 772.5,1570.2 V1666.0 Z"/>
<path d="M798.9,1666.0 V1594.3 Q798.9,1592.7 800.5,1592.7 H823.5 Q825.1,1592.7 825.1,1594.3 V1666.0 Z"/>
<path d="M851.4,1666.0 V1594.3 Q851.4,1592.7 853.0,1592.7 H876.0 Q877.6,1592.7 877.6,1594.3 V1666.0 Z"/>
<path d="M903.9,1666.0 V1584.7 Q903.9,1583.1 905.5,1583.1 H928.5 Q930.1,1583.1 930.1,1584.7 V1666.0 Z"/>
<path d="M956.5,1666.0 V1607.9 Q956.5,1606.3 958.1,1606.3 H981.1 Q982.7,1606.3 982.7,1607.9 V1666.0 Z"/>
<path d="M1009.0,1666.0 V1612.4 Q1009.0,1610.8 1010.6,1610.8 H1033.6 Q1035.2,1610.8 1035.2,1612.4 V1666.0 Z"/>
<path d="M1061.6,1666.0 V1606.9 Q1061.6,1605.3 1063.2,1605.3 H1086.2 Q1087.8,1605.3 1087.8,1606.9 V1666.0 Z"/>
<path d="M1114.1,1666.0 V1589.2 Q1114.1,1587.6 1115.7,1587.6 H1138.7 Q1140.3,1587.6 1140.3,1589.2 V1666.0 Z"/>
<path d="M1166.6,1666.0 V1602.8 Q1166.6,1601.2 1168.2,1601.2 H1191.2 Q1192.8,1601.2 1192.8,1602.8 V1666.0 Z"/>
<path d="M1219.2,1666.0 V1615.9 Q1219.2,1614.3 1220.8,1614.3 H1243.8 Q1245.4,1614.3 1245.4,1615.9 V1666.0 Z"/>
<path d="M1271.7,1666.0 V1615.4 Q1271.7,1613.8 1273.3,1613.8 H1296.3 Q1297.9,1613.8 1297.9,1615.4 V1666.0 Z"/>
<path d="M1324.3,1666.0 V1593.8 Q1324.3,1592.2 1325.9,1592.2 H1348.9 Q1350.5,1592.2 1350.5,1593.8 V1666.0 Z"/>
<path d="M1376.8,1666.0 V1623.0 Q1376.8,1621.4 1378.4,1621.4 H1401.4 Q1403.0,1621.4 1403.0,1623.0 V1666.0 Z"/>
<path d="M1429.3,1666.0 V1619.9 Q1429.3,1618.3 1430.9,1618.3 H1453.9 Q1455.5,1618.3 1455.5,1619.9 V1666.0 Z"/>
<path d="M1481.9,1666.0 V1616.4 Q1481.9,1614.8 1483.5,1614.8 H1506.5 Q1508.1,1614.8 1508.1,1616.4 V1666.0 Z"/>
</g>
<rect x="951" y="1354" width="11.5" height="11.5" fill="#63ae96"/>
<text x="975" y="1368.3" font-size="24" fill="#333">amount</text>
</svg>
<svg width="2874" height="1738" viewBox="0 0 2874 1738" style="left:0;top:0">
<g stroke="#e6e6e6" stroke-width="1.6">
<line x1="1826.1" y1="1392.3" x2="1826.1" y2="1667.0"/>
<line x1="1878.6" y1="1392.3" x2="1878.6" y2="1667.0"/>
<line x1="1931.2" y1="1392.3" x2="1931.2" y2="1667.0"/>
<line x1="1983.7" y1="1392.3" x2="1983.7" y2="1667.0"/>
<line x1="2036.3" y1="1392.3" x2="2036.3" y2="1667.0"/>
<line x1="2088.8" y1="1392.3" x2="2088.8" y2="1667.0"/>
<line x1="2141.3" y1="1392.3" x2="2141.3" y2="1667.0"/>
<line x1="2193.9" y1="1392.3" x2="2193.9" y2="1667.0"/>
<line x1="2246.4" y1="1392.3" x2="2246.4" y2="1667.0"/>
<line x1="2299.0" y1="1392.3" x2="2299.0" y2="1667.0"/>
<line x1="2351.5" y1="1392.3" x2="2351.5" y2="1667.0"/>
<line x1="2404.0" y1="1392.3" x2="2404.0" y2="1667.0"/>
<line x1="2456.6" y1="1392.3" x2="2456.6" y2="1667.0"/>
<line x1="2509.1" y1="1392.3" x2="2509.1" y2="1667.0"/>
<line x1="2561.7" y1="1392.3" x2="2561.7" y2="1667.0"/>
<line x1="2614.2" y1="1392.3" x2="2614.2" y2="1667.0"/>
<line x1="2666.7" y1="1392.3" x2="2666.7" y2="1667.0"/>
<line x1="2719.3" y1="1392.3" x2="2719.3" y2="1667.0"/>
</g>
<path d="M1799.7,1392.3 V1667.0 H2745" stroke="#d2d2d2" stroke-width="2" fill="none"/>
<g font-size="24" fill="#333" text-anchor="end">
<text x="1780.3" y="1398.7">40万</text>
<text x="1780.3" y="1467.7">30万</text>
<text x="1780.3" y="1536.7">20万</text>
<text x="1780.3" y="1605.2">10万</text>
<text x="1780.3" y="1673.7">0</text>
</g>
<text x="1707" y="1521" font-size="24" fill="#333" text-anchor="middle" transform="rotate(90 1707 1521)" dy="7">amount</text>
<g font-size="24" fill="#333" letter-spacing="0.6">
<text x="1821.5" y="1711.1" transform="rotate(28.5 1821.5 1702.5)">201601</text>
<text x="1926.6" y="1711.1" transform="rotate(28.5 1926.6 1702.5)">201603</text>
<text x="2031.7" y="1711.1" transform="rotate(28.5 2031.7 1702.5)">201605</text>
<text x="2136.7" y="1711.1" transform="rotate(28.5 2136.7 1702.5)">201607</text>
<text x="2241.8" y="1711.1" transform="rotate(28.5 2241.8 1702.5)">201609</text>
<text x="2346.9" y="1711.1" transform="rotate(28.5 2346.9 1702.5)">201611</text>
<text x="2452.0" y="1711.1" transform="rotate(28.5 2452.0 1702.5)">201701</text>
<text x="2557.1" y="1711.1" transform="rotate(28.5 2557.1 1702.5)">201703</text>
<text x="2714.7" y="1711.1" transform="rotate(28.5 2714.7 1702.5)">201706</text>
</g>
<path d="M1826.1,1460.4 C1843.6,1435.8 1861.1,1411.3 1878.6,1405.4 C1896.2,1399.5 1913.7,1396.6 1931.2,1396.6 C1948.7,1396.6 1966.2,1550.2 1983.7,1567.0 C2001.2,1583.8 2018.7,1592.2 2036.3,1592.2 C2053.8,1592.2 2071.3,1592.2 2088.8,1592.2 C2106.3,1592.2 2123.8,1582.5 2141.3,1582.5 C2158.9,1582.5 2176.4,1602.0 2193.9,1605.4 C2211.4,1608.8 2228.9,1610.5 2246.4,1610.5 C2263.9,1610.5 2281.4,1608.2 2299.0,1604.4 C2316.5,1600.6 2334.0,1587.6 2351.5,1587.6 C2369.0,1587.6 2386.5,1596.9 2404.0,1601.3 C2421.6,1605.7 2439.1,1614.1 2456.6,1614.1 C2474.1,1614.1 2491.6,1614.1 2509.1,1614.1 C2526.6,1614.1 2544.1,1591.7 2561.7,1591.7 C2579.2,1591.7 2596.7,1620.7 2614.2,1620.7 C2631.7,1620.7 2649.2,1619.0 2666.7,1618.1 C2684.3,1617.2 2701.8,1616.1 2719.3,1615.1" stroke="#6e66e8" stroke-width="3.2" fill="none" stroke-linejoin="round"/>
<path d="M2174.5,1360.2 H2186.5" stroke="#6e66e8" stroke-width="3.4"/>
<text x="2200.5" y="1368.3" font-size="24" fill="#333">amount</text>
</svg>
<div class="t" style="left:2728px;top:1710px;font-size:18px;color:rgba(120,120,120,.72);text-shadow:0 0 2px #fff">CSDN @柳小葱</div>
</body></html>
